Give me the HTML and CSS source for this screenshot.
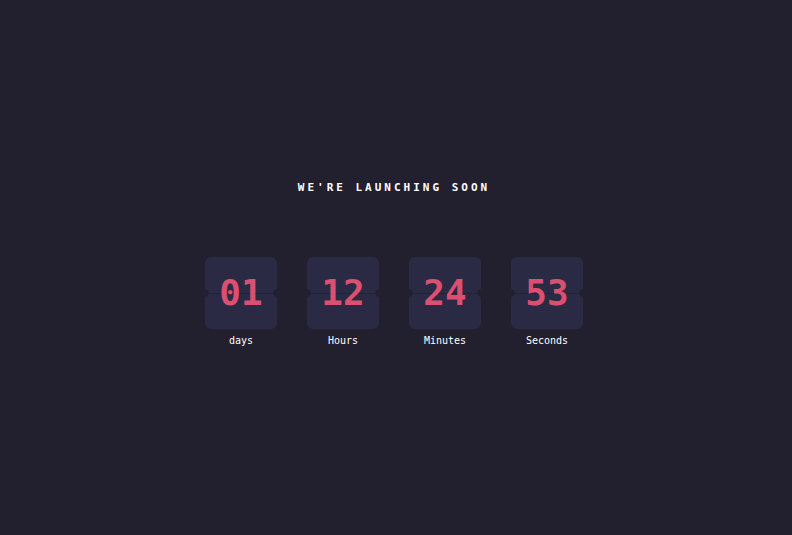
FILE: index.html
```html
<!DOCTYPE html>
<html lang="en">
<head>
<meta charset="utf-8">
<title>We're launching soon</title>
<link rel="stylesheet" href="styles.css">
</head>
<body>
<main class="page">
  <h1 class="title">WE'RE LAUNCHING SOON</h1>
  <div class="timer">
    <div class="unit"><div class="card"><span class="num">01</span></div><span class="label">days</span></div>
    <div class="unit"><div class="card"><span class="num">12</span></div><span class="label">Hours</span></div>
    <div class="unit"><div class="card"><span class="num">24</span></div><span class="label">Minutes</span></div>
    <div class="unit"><div class="card"><span class="num">53</span></div><span class="label">Seconds</span></div>
  </div>
</main>
</body>
</html>
```
FILE: styles.css
```css
html, body {
  margin: 0;
  height: 100%;
  background: #221f2e;
  font-family: "DejaVu Sans Mono", "Liberation Mono", monospace;
}
.page {
  height: 100%;
  display: flex;
  flex-direction: column;
  align-items: center;
  padding-top: 181px;
  padding-right: 4px;
  box-sizing: border-box;
}
.title {
  margin: 0;
  color: #ffffff;
  font-size: 11px;
  font-weight: bold;
  letter-spacing: 3px;
  line-height: 14px;
}
.timer {
  display: flex;
  gap: 30px;
  margin-top: 62px;
}
.unit {
  display: flex;
  flex-direction: column;
  align-items: center;
  gap: 5px;
}
.card {
  position: relative;
  width: 72px;
  height: 72px;
  border-radius: 6px;
  background: #2b2a44;
  display: flex;
  align-items: center;
  justify-content: center;
  overflow: hidden;
}
.card::before {
  content: "";
  position: absolute;
  left: 0;
  right: 0;
  top: 36px;
  height: 1px;
  background: #24223a;
}
.card::after {
  content: "";
  position: absolute;
  left: -4px;
  right: -4px;
  top: 32px;
  height: 8px;
  background:
    radial-gradient(circle at 4px 4px, #221f2e 3.5px, transparent 4px) left / 8px 8px no-repeat,
    radial-gradient(circle at 4px 4px, #221f2e 3.5px, transparent 4px) right / 8px 8px no-repeat;
}
.num {
  position: relative;
  z-index: 1;
  color: #db4f70;
  font-size: 36px;
  font-weight: bold;
  line-height: 1;
}
.label {
  color: #ffffff;
  font-size: 10px;
  line-height: 14px;
}
```
